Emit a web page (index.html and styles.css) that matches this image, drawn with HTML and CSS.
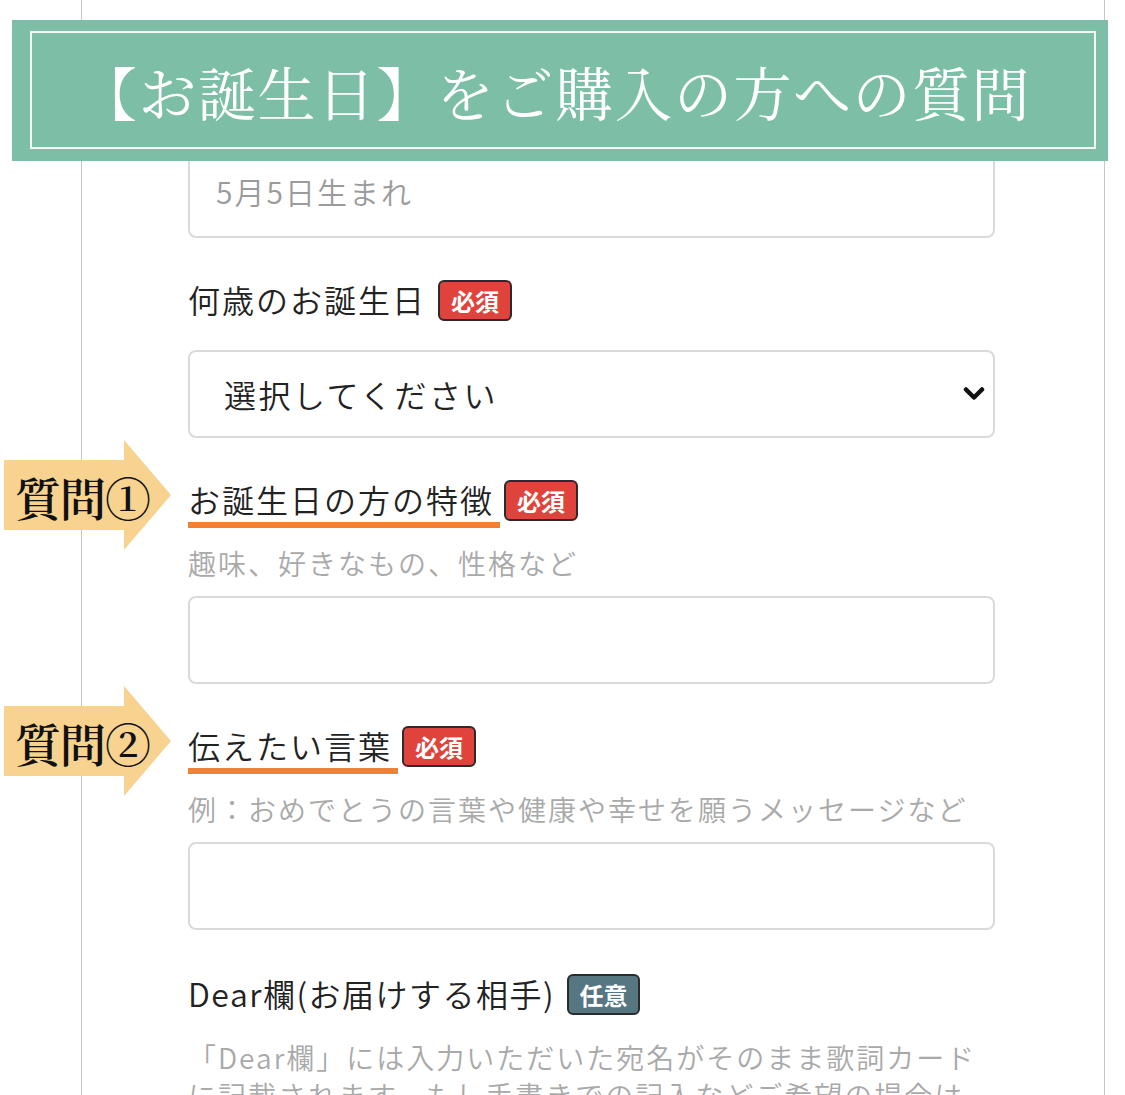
FILE: index.html
```html
<!DOCTYPE html>
<html lang="ja">
<head>
<meta charset="utf-8">
<title>【お誕生日】をご購入の方への質問</title>
<link rel="stylesheet" href="styles.css">
</head>
<body>
<div class="page">
  <div class="form">
    <div class="input first"><span class="placeholder">5月5日生まれ</span></div>

    <div class="field">
      <div class="label-row">
        <span class="label">何歳のお誕生日</span>
        <span class="badge req">必須</span>
      </div>
      <div class="select">
        <span class="select-text">選択してください</span>
        <svg class="chevron" viewBox="0 0 22 16" width="22" height="16"><path d="M3 3.5 L11 11.5 L19 3.5" fill="none" stroke="#111" stroke-width="4.5" stroke-linecap="round" stroke-linejoin="round"/></svg>
      </div>
    </div>

    <div class="field">
      <div class="q-arrow"><span class="q-text">質問①</span></div>
      <div class="label-row">
        <span class="label marked">お誕生日の方の特徴</span>
        <span class="badge req near">必須</span>
      </div>
      <p class="help">趣味、好きなもの、性格など</p>
      <div class="input"></div>
    </div>

    <div class="field">
      <div class="q-arrow"><span class="q-text">質問②</span></div>
      <div class="label-row">
        <span class="label marked">伝えたい言葉</span>
        <span class="badge req near">必須</span>
      </div>
      <p class="help">例：おめでとうの言葉や健康や幸せを願うメッセージなど</p>
      <div class="input"></div>
    </div>

    <div class="field last">
      <div class="label-row">
        <span class="label latin">Dear欄(お届けする相手)</span>
        <span class="badge opt">任意</span>
      </div>
      <p class="help">「Dear欄」には入力いただいた宛名がそのまま歌詞カードに記載されます。もし手書きでの記入などご希望の場合は</p>
    </div>
  </div>

  <div class="banner">
    <div class="banner-inner">【お誕生日】をご購入の方への質問</div>
  </div>
</div>
</body>
</html>
```

FILE: styles.css
```css
html, body {
  margin: 0;
  padding: 0;
  background: #ffffff;
  overflow: hidden;
  height: 1095px;
}

body {
  font-family: "Noto Sans CJK JP", "Noto Sans", sans-serif;
  color: #222222;
}

.page {
  position: relative;
  height: 1095px;
  overflow: hidden;
}

.form {
  box-sizing: border-box;
  margin-left: 81px;
  width: 1024px;
  min-height: 1095px;
  border-left: 1.5px solid #c4c4c4;
  border-right: 1.5px solid #c4c4c4;
  padding: 150px 0 0 106px;
}

.input,
.select {
  box-sizing: border-box;
  width: 807px;
  height: 88px;
  border: 2px solid #dadada;
  border-radius: 8px;
  background: #fff;
  display: flex;
  align-items: center;
}

.input.first {
  padding-left: 26px;
  align-items: flex-end;
  padding-bottom: 25px;
}

.placeholder {
  font-size: 30px;
  font-weight: 350;
  letter-spacing: 2px;
  color: #9b9b9b;
  line-height: 40px;
}

.field {
  position: relative;
  margin-top: 42px;
}

.field.last {
  margin-top: 44px;
}

.label-row {
  display: flex;
  align-items: flex-start;
  height: 42px;
}

.label {
  font-size: 32px;
  font-weight: 350;
  line-height: 38px;
  letter-spacing: 2px;
  color: #222;
  white-space: nowrap;
}

.label.latin {
  letter-spacing: 1.5px;
}

.label.marked {
  padding-right: 6px;
  border-bottom: 6px solid #f08034;
  line-height: 38px;
  height: 42px;
}

.badge {
  box-sizing: border-box;
  height: 41px;
  width: 74px;
  margin-left: 12px;
  border: 2px solid #2b2b2b;
  border-radius: 6px;
  color: #ffffff;
  font-size: 24px;
  font-weight: 700;
  line-height: 37px;
  text-align: center;
  letter-spacing: 0;
}

.badge.near {
  margin-left: 4px;
}

.badge.req {
  background: #e0433b;
}

.badge.opt {
  background: #567682;
  width: 73px;
}

.select {
  margin-top: 28px;
  padding: 0 8px 0 34px;
  justify-content: space-between;
}

.select-text {
  font-size: 32px;
  font-weight: 350;
  letter-spacing: 2.5px;
  color: #222;
  line-height: 42px;
}

.chevron {
  display: block;
}

.help {
  margin: 22px 0 0 0;
  font-size: 28px;
  font-weight: 350;
  line-height: 38px;
  letter-spacing: 2px;
  color: #a9a9a9;
  width: 807px;
}

.help + .input {
  margin-top: 14px;
}

.q-arrow {
  position: absolute;
  left: -184px;
  top: -40px;
  width: 168px;
  height: 110px;
  background: #f8d28f;
  clip-path: polygon(0 20px, 120px 20px, 120px 0, 167px 55px, 120px 110px, 120px 90px, 0 90px);
  display: flex;
  align-items: center;
}

.q-text {
  margin-left: 11px;
  margin-top: 2px;
  font-family: "Noto Serif CJK JP", "Noto Sans CJK JP", serif;
  font-size: 46px;
  font-weight: 600;
  line-height: 50px;
  color: #111;
  letter-spacing: -1px;
  white-space: nowrap;
}

.banner {
  position: absolute;
  left: 12px;
  top: 20px;
  width: 1096px;
  height: 141px;
  box-sizing: border-box;
  background: #7dbea6;
  padding: 11px 12px 12px 18px;
}

.banner-inner {
  box-sizing: border-box;
  height: 100%;
  border: 2px solid #f4faf7;
  display: flex;
  align-items: center;
  justify-content: center;
  color: #ffffff;
  font-family: "Noto Serif CJK JP", "Noto Sans CJK JP", serif;
  font-size: 58px;
  letter-spacing: 1.5px;
  line-height: 1;
  padding-right: 16px;
  padding-top: 2px;
  white-space: nowrap;
}
```
